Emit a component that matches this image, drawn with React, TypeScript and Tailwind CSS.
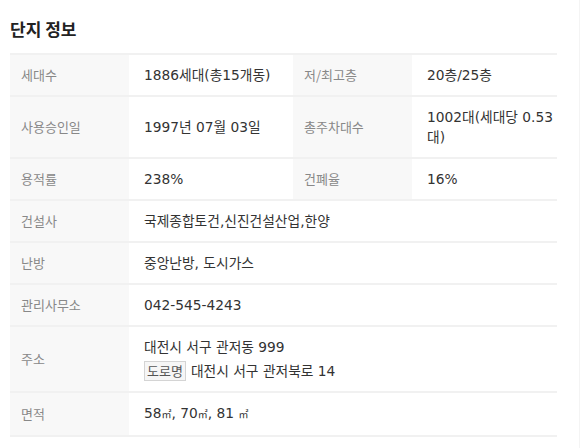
const FONT = { fontFamily: '"Noto Sans CJK KR", "Noto Sans", sans-serif' };
const VALUE_FONT = { fontFamily: '"DejaVu Sans", "Noto Sans CJK KR", sans-serif' };

type Cell = { label: string; value: React.ReactNode };

const ROWS: (Cell | [Cell, Cell])[] = [
  [
    { label: '세대수', value: '1886세대(총15개동)' },
    { label: '저/최고층', value: '20층/25층' },
  ],
  [
    { label: '사용승인일', value: '1997년 07월 03일' },
    { label: '총주차대수', value: '1002대(세대당 0.53 대)' },
  ],
  [
    { label: '용적률', value: '238%' },
    { label: '건폐율', value: '16%' },
  ],
  { label: '건설사', value: '국제종합토건,신진건설산업,한양' },
  { label: '난방', value: '중앙난방, 도시가스' },
  { label: '관리사무소', value: '042-545-4243' },
  {
    label: '주소',
    value: (
      <div>
        <div>대전시 서구 관저동 999</div>
        <div className="mt-[4px] flex items-center">
          <span
            className="border border-[#d4d4d4] bg-[#f6f6f6] px-[2px] leading-[18px] text-[13px] text-[#555]"
            style={FONT}
          >
            도로명
          </span>
          <span className="ml-[5px]">대전시 서구 관저북로 14</span>
        </div>
      </div>
    ),
  },
  {
    label: '면적',
    value: (
      <span>
        58<span className="text-[10px]">㎡</span>, 70<span className="text-[10px]">㎡</span>, 81{' '}
        <span className="text-[10px]">㎡</span>
      </span>
    ),
  },
];

function Label({ text }: { text: string }) {
  return (
    <div className="w-[119px] shrink-0 bg-[#f8f8f8] pl-[11px] flex items-center text-[13px] text-[#888]">{text}</div>
  );
}

function Value({ children, wide }: { children: React.ReactNode; wide?: boolean }) {
  return (
    <div
      className={`${wide ? 'flex-1' : 'w-[164px] shrink-0'} pl-[15px] py-[10px] flex items-center text-[13.75px] text-[#333]`}
      style={VALUE_FONT}
    >
      {children}
    </div>
  );
}

export default function App() {
  return (
    <div className="w-[580px] h-[448px] bg-white border-r border-[#f4f4f4] pl-[10px] pr-[22px]" style={FONT}>
      <h2 className="pt-[16px] pb-[11px] text-[17px] font-bold text-[#222] leading-[26px]">단지 정보</h2>
      <div className="border-t-2 border-[#f1f1f1] leading-[20px]">
        {ROWS.map((row, i) =>
          Array.isArray(row) ? (
            <div key={i} className="flex border-b-2 border-[#f1f1f1]">
              <Label text={row[0].label} />
              <Value>{row[0].value}</Value>
              <Label text={row[1].label} />
              <Value wide>{row[1].value}</Value>
            </div>
          ) : (
            <div key={i} className="flex border-b-2 border-[#f1f1f1]">
              <Label text={row.label} />
              <Value wide>{row.value}</Value>
            </div>
          )
        )}
      </div>
    </div>
  );
}
